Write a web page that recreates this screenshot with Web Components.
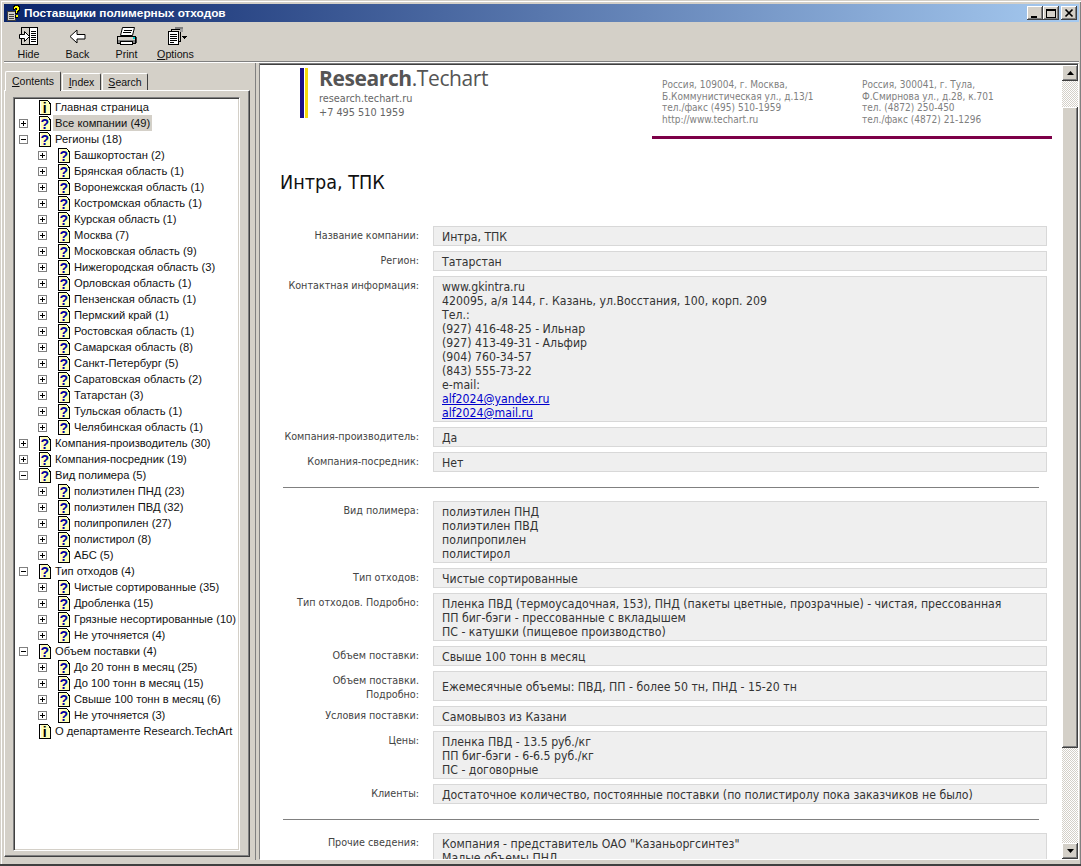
<!DOCTYPE html>
<html lang="ru"><head><meta charset="utf-8"><title>Поставщики полимерных отходов</title>
<style>html,body{margin:0;padding:0;height:100%;overflow:hidden;background:#d4d0c8}</style></head>
<body>
<help-window>
  <help-titlebar slot="title">Поставщики полимерных отходов</help-titlebar>
  <help-toolbar slot="tools"></help-toolbar>
  <help-nav slot="nav"></help-nav>
  <help-page slot="page"></help-page>
</help-window>
<script>
const def=(n,css,html)=>customElements.define(n,class extends HTMLElement{connectedCallback(){if(this.shadowRoot)return;const r=this.attachShadow({mode:'open'});r.innerHTML='<style>'+css+'</style>'+(typeof html==='function'?html(this):html);}});
const ICON_TOOLS={
hide:`<svg width="22" height="21" viewBox="0 0 22 21" shape-rendering="crispEdges"><path fill="#fff" d="M4 1h16v18H4z"/><path fill="#d4d0c8" d="M4 1h7v18H4z"/><path fill="none" stroke="#000" d="M3.500 1.500h16v17h-16zM11.500 1.500v17"/><path stroke="#000" d="M13 5h5M13 7h5M13 9h5M13 11h5M13 13h5M13 15h5"/><path fill="#fff" stroke="#000" d="M1.500 8.500h5v-3l5 5-5 5v-3h-5z" shape-rendering="auto"/></svg>`,
back:`<svg width="22" height="21" viewBox="0 0 22 21"><path fill="#fff" stroke="#000" stroke-linejoin="miter" d="M3 10.500l7-6.500v4.500h8v4.500h-8v4z"/></svg>`,
print:`<svg width="22" height="21" viewBox="0 0 22 21" shape-rendering="crispEdges"><path fill="#fff" stroke="#000" d="M6.500 1.500h12l-2 8h-12z" shape-rendering="auto"/><path stroke="#000" d="M8 4h8M7 6h8"/><path fill="#d4d0c8" stroke="#000" d="M1.500 10.500h18v7h-18z"/><path fill="#808080" d="M2 14h17v3H2z"/><path fill="#fff" stroke="#000" d="M4.500 15.500h12v3h-12z"/><path fill="#0cc" d="M17 11h2v2h-2z"/><path fill="#404040" d="M20 11h1v6h-1z"/></svg>`,
options:`<svg width="22" height="21" viewBox="0 0 22 21" shape-rendering="crispEdges"><path fill="#d4d0c8" stroke="#000" d="M6.500 3.500h9v12h-9z"/><path fill="#fff" stroke="#000" d="M3.500 5.500h10v13h-10z"/><path stroke="#000" d="M5 8h7M5 10h7M5 12h7M5 14h7M5 16h4"/><path fill="#808080" d="M10 1h8v2h-8z"/><path fill="#a0a0a0" d="M15 3h3v3h-3z"/><path fill="#000" d="M17 10h5l-2.500 3z"/></svg>`};
def('help-window',`:host{display:flex;flex-direction:column;height:866px;width:1081px;box-sizing:border-box;padding:4px 2px 6px 4px;background:#d4d0c8;overflow:hidden;box-shadow:inset 0 -2px #404040,inset 1px 1px #d4d0c8,inset 2px 2px #fff,inset -1px 0 #808080}
.main{flex:1;display:flex;min-height:0;margin-top:1px}.nav{width:246px;flex:none}.split{width:3px;margin-left:5px;border-left:1px solid #808080;flex:none}.page{flex:1;min-width:0}`,
`<slot name="title"></slot><slot name="tools"></slot><div class="main"><div class="nav"><slot name="nav"></slot></div><div class="split"></div><div class="page"><slot name="page"></slot></div></div>`);
def('help-titlebar',`:host{display:flex;align-items:center;height:18px;background:linear-gradient(90deg,#0a246a,#a6caf0);color:#fff;font:bold 11.800px/18px "Liberation Sans",sans-serif;flex:none;padding-right:2px;gap:3px}
svg{flex:none;margin-left:1px}.t{flex:1;white-space:nowrap}.b{width:16px;height:14px;background:#d4d0c8;box-shadow:inset -1px -1px #404040,inset 1px 1px #fff,inset -2px -2px #808080;display:flex}.b svg{margin:0}.bs{display:flex}.bs .b:last-child{margin-left:2px}`,
`<svg width="16" height="16" viewBox="0 0 16 16" shape-rendering="crispEdges"><path fill="#d4d0c8" stroke="#404040" d="M2.500 6.500h8v9h-8z"/><path stroke="#404040" d="M4 9h5M4 11h5M4 13h5"/><path fill="#000" d="M9 0h5v1h1v5h-1v1h-1v2h-3V6h1V4h-1v1H8V1h1z"/><path fill="#ff0" d="M10 1h3v1h1v3h-1v1h-1v2h-1V5h1V3h-2v1H9V2h1z"/><path fill="#000" d="M10 10h3v3h-3z"/><path fill="#ff0" d="M11 10h2v2h-2z"/></svg><span class="t"><slot></slot></span>
<span class="bs"><span class="b"><svg width="16" height="14" shape-rendering="crispEdges"><path d="M4 10h6v2H4z"/></svg></span><span class="b"><svg width="16" height="14" shape-rendering="crispEdges"><path fill="none" stroke="#000" d="M3.500 3.500h9v8h-9z"/><path d="M3 3h10v2H3z"/></svg></span><span class="b"><svg width="16" height="14"><path stroke="#000" stroke-width="1.700" d="M4.500 3.500l7 7M11.500 3.500l-7 7"/></svg></span></span>`);
def('help-tool',`:host{display:flex;flex-direction:column;align-items:center;width:49px;font:10.700px/13px "Liberation Sans",sans-serif;color:#111}.i{height:21px;display:block;margin-bottom:1px}`,
el=>`<span class="i">${ICON_TOOLS[el.getAttribute('icon')]}</span><span><slot></slot></span>`);
def('help-toolbar',`:host{display:flex;height:40px;box-sizing:border-box;padding:4px 0 0 0;flex:none;border-bottom:1px solid #808080;box-shadow:0 1px #fff}u{text-decoration:underline}`,
`<help-tool icon="hide">Hide</help-tool><help-tool icon="back">Back</help-tool><help-tool icon="print">Print</help-tool><help-tool icon="options"><u>O</u>ptions</help-tool>`);
function icon(q){return `<svg width="12" height="15" viewBox="0 0 12 15" shape-rendering="crispEdges" style="flex:none"><path fill="#ffffb8" d="M1 1h7l3 3v10H1z"/><path fill="#fff" d="M1 1h1v13H1z"/><path fill="none" stroke="#000" d="M.5.500h8l2.500 3v10.500H.5z"/><path stroke="#000" d="M11.500 15V4"/><text x="5.800" y="12.500" text-anchor="middle" font-family="Liberation Sans" font-weight="bold" font-size="14" fill="${q?'#0000a0':'#000'}" shape-rendering="auto">${q?'?':'i'}</text></svg>`}
def('tree-item',`:host{display:flex;align-items:center;height:16px;font:11.200px/16px "Liberation Sans",sans-serif;color:#111;white-space:nowrap;padding-left:calc(var(--lvl,0)*19px)}
.x{width:9px;height:9px;flex:none;margin:0 11px 0 5px;box-sizing:border-box;border:1px solid #808080;background:#fff;position:relative}
.x.none{visibility:hidden}.x::before{content:"";position:absolute;left:1px;top:3px;width:5px;height:1px;background:#000}.x.plus::after{content:"";position:absolute;left:3px;top:1px;width:1px;height:5px;background:#000}
.l{margin-left:2px;padding:0 2px;height:16px}.sel{background:#d4d0c8}`,
el=>{const t=el.getAttribute('type')||'plus';return `<span class="x ${t}"></span>${icon(el.getAttribute('kind')!=='i')}<span class="l ${el.hasAttribute('selected')?'sel':''}"><slot></slot></span>`});
const TREE=[[0,'none','i','Главная страница'],[0,'plus','q','Все компании (49)',1],[0,'minus','q','Регионы (18)'],...['Башкортостан (2)','Брянская область (1)','Воронежская область (1)','Костромская область (1)','Курская область (1)','Москва (7)','Московская область (9)','Нижегородская область (3)','Орловская область (1)','Пензенская область (1)','Пермский край (1)','Ростовская область (1)','Самарская область (8)','Санкт-Петербург (5)','Саратовская область (2)','Татарстан (3)','Тульская область (1)','Челябинская область (1)'].map(s=>[1,'plus','q',s]),
[0,'plus','q','Компания-производитель (30)'],[0,'plus','q','Компания-посредник (19)'],[0,'minus','q','Вид полимера (5)'],...['полиэтилен ПНД (23)','полиэтилен ПВД (32)','полипропилен (27)','полистирол (8)','АБС (5)'].map(s=>[1,'plus','q',s]),
[0,'minus','q','Тип отходов (4)'],...['Чистые сортированные (35)','Дробленка (15)','Грязные несортированные (10)','Не уточняется (4)'].map(s=>[1,'plus','q',s]),
[0,'minus','q','Объем поставки (4)'],...['До 20 тонн в месяц (25)','До 100 тонн в месяц (15)','Свыше 100 тонн в месяц (6)','Не уточняется (3)'].map(s=>[1,'plus','q',s]),[0,'none','i','О департаменте Research.TechArt']];
def('help-nav',`:host{display:flex;flex-direction:column;height:100%;padding-top:7px;box-sizing:border-box;font:10.500px/14px "Liberation Sans",sans-serif;color:#111}
.tabs{display:flex;padding-left:1px;align-items:flex-end;height:20px;flex:none;position:relative;z-index:1}
.tab{background:#d4d0c8;height:17px;line-height:17px;text-align:center;box-sizing:border-box;border:1px solid #fff;border-right:1px solid #404040;border-bottom:0;border-radius:2px 2px 0 0;margin-left:1px}
.tab.i{width:39px}.tab.s{width:46px}.tab.on{width:56px;height:20px;margin:0 0 -1px;line-height:18px;position:relative;z-index:2}u{text-decoration:underline}
.panel{flex:1;min-height:0;border:1px solid;border-color:#fff #404040 #404040 #fff;box-shadow:inset -1px -1px #808080;padding:6px 9px 5px 8px;display:flex;margin-bottom:3px}
.tree{flex:1;background:#fff;border:1px solid;border-color:#808080 #fff #fff #808080;box-shadow:inset 1px 1px #404040,inset -1px -1px #d4d0c8;padding:1px 0 0 0;overflow:hidden;min-width:0}`,
()=>`<div class="tabs"><span class="tab on"><u>C</u>ontents</span><span class="tab i"><u>I</u>ndex</span><span class="tab s"><u>S</u>earch</span></div><div class="panel"><div class="tree">${TREE.map(r=>`<tree-item style="--lvl:${r[0]}" type="${r[1]}" kind="${r[2]}" ${r[4]?'selected':''}>${r[3]}</tree-item>`).join('')}</div></div>`);
def('form-row',`:host{display:grid;grid-template-columns:159px 614px;column-gap:14px;margin-bottom:5px;font:12.200px/14px var(--ui);color:#333}
.k{text-align:right;font-size:10.700px;line-height:13.500px;padding-top:3px;color:#444}.v{background:#efefef;border:1px solid #d8d8d8;padding:3px 8px 1px;min-height:14px;display:flex;align-items:center;white-space:nowrap;overflow:hidden}
:host([tall]) .v{padding-bottom:40px}`,
el=>`<div class="k">${el.getAttribute('label')}</div><div class="v"><div><slot></slot></div></div>`);
def('company-header',`:host{display:block;position:relative;height:76px;box-sizing:border-box;padding:4px 0 0 40px}
.wrap{display:flex}.bars{display:flex;gap:1px;height:50px;flex:none}.bars i{display:block;width:3.500px;background:#1c0f87}.bars i+i{background:#f4d80c}
.brand{margin:0 0 0 11px;color:#666;font:10.800px/13.500px var(--ui);width:343px;flex:none}.brand b{font:bold 21px/21px "Open Sans","Liberation Sans",sans-serif;color:#555;display:block;letter-spacing:-.4px;margin-bottom:3px;white-space:nowrap}.brand b span{font-weight:400}
.a{font:10px/11.670px var(--ui);color:#808080;width:200px;flex:none;padding-top:11px;white-space:nowrap}
.line{position:absolute;left:392px;width:400px;height:3px;top:72px;background:#7d0048}`,
`<div class="wrap"><div class="bars"><i></i><i></i></div><div class="brand"><b>Research<span>.Techart</span></b>research.techart.ru<br>+7 495 510 1959</div><div class="a">Россия, 109004, г. Москва,<br>Б.Коммунистическая ул., д.13/1<br>тел./факс (495) 510-1959<br>http://www.techart.ru</div><div class="a">Россия, 300041, г. Тула,<br>Ф.Смирнова ул., д.28, к.701<br>тел. (4872) 250-450<br>тел./факс (4872) 21-1296</div></div><div class="line"></div>`);
def('form-sep',`:host{display:block;height:1px;background:#808080;margin:15px 0 13px 23px;width:756px}`,'');
def('help-page',`:host{display:flex;height:100%;box-sizing:border-box;border:1px solid;border-color:#808080 #fff #fff #808080;box-shadow:inset 0 1px #404040;background:#fff;--ui:"DejaVu Sans Condensed","DejaVu Sans",sans-serif;overflow:hidden}
.scroll{flex:1;min-width:0;overflow:hidden}
h1{font:19.600px/24px var(--ui);margin:31px 0 31px 20px;color:#111}
a{color:#00c}
.sb{width:16px;flex:none;margin-top:1px;background:repeating-conic-gradient(#d4d0c8 0 25%,#fff 0 50%) 0 0/2px 2px;display:flex;flex-direction:column}
.btn{height:16px;background:#d4d0c8;box-shadow:inset -1px -1px #404040,inset 1px 1px #fff,inset -2px -2px #808080;display:flex;align-items:center;justify-content:center;flex:none}
.gap{height:26px;flex:none}.thumb{height:641px;flex:none;background:#d4d0c8;box-shadow:inset -1px -1px #404040,inset 1px 1px #fff,inset -2px -2px #808080}.end{flex:1}`,
`<div class="scroll"><company-header></company-header><h1>Интра, ТПК</h1><div>
<form-row label="Название компании:">Интра, ТПК</form-row>
<form-row label="Регион:">Татарстан</form-row>
<form-row label="Контактная информация:">www.gkintra.ru<br>420095, а/я 144, г. Казань, ул.Восстания, 100, корп. 209<br>Тел.:<br>(927) 416-48-25 - Ильнар<br>(927) 413-49-31 - Альфир<br>(904) 760-34-57<br>(843) 555-73-22<br>e-mail:<br><a href="#">alf2024@yandex.ru</a><br><a href="#">alf2024@mail.ru</a></form-row>
<form-row label="Компания-производитель:">Да</form-row>
<form-row label="Компания-посредник:">Нет</form-row>
<form-sep></form-sep>
<form-row label="Вид полимера:">полиэтилен ПНД<br>полиэтилен ПВД<br>полипропилен<br>полистирол</form-row>
<form-row label="Тип отходов:">Чистые сортированные</form-row>
<form-row label="Тип отходов. Подробно:">Пленка ПВД (термоусадочная, 153), ПНД (пакеты цветные, прозрачные) - чистая, прессованная<br>ПП биг-бэги - прессованные с вкладышем<br>ПС - катушки (пищевое производство)</form-row>
<form-row label="Объем поставки:">Свыше 100 тонн в месяц</form-row>
<form-row label="Объем поставки.<br>Подробно:">Ежемесячные объемы: ПВД, ПП - более 50 тн, ПНД - 15-20 тн</form-row>
<form-row label="Условия поставки:">Самовывоз из Казани</form-row>
<form-row label="Цены:">Пленка ПВД - 13.5 руб./кг<br>ПП биг-бэги - 6-6.5 руб./кг<br>ПС - договорные</form-row>
<form-row label="Клиенты:">Достаточное количество, постоянные поставки (по полистиролу пока заказчиков не было)</form-row>
<form-sep></form-sep>
<form-row tall label="Прочие сведения:">Компания - представитель ОАО "Казаньоргсинтез"<br>Малые объемы ПНД</form-row>
</div></div>
<div class="sb"><div class="btn"><svg width="7" height="4"><path d="M3.500 0L7 4H0z"/></svg></div><div class="gap"></div><div class="thumb"></div><div class="end"></div><div class="btn"><svg width="7" height="4"><path d="M0 0h7L3.500 4z"/></svg></div></div>`);
</script>
</body></html>
